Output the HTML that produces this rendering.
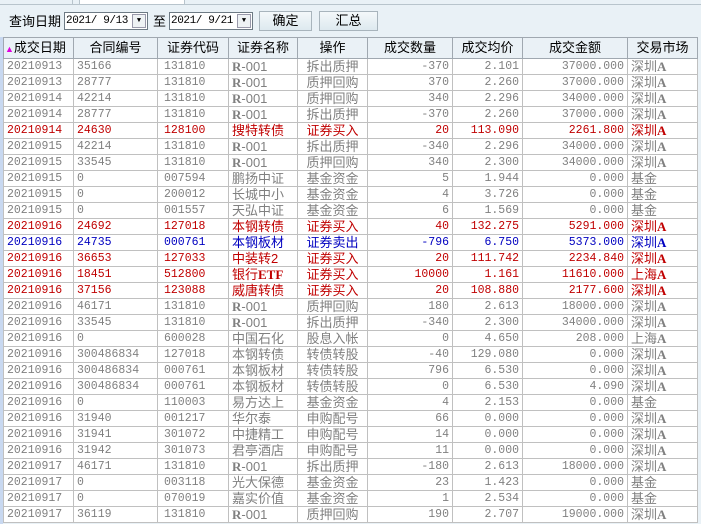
<!DOCTYPE html>
<html><head><meta charset="utf-8"><style>
*{margin:0;padding:0;box-sizing:border-box}
body{width:701px;height:524px;overflow:hidden;background:#e9f1f6;font-family:"Liberation Sans","Noto Sans CJK SC",sans-serif;font-size:12px;position:relative}
.tab{position:absolute;left:79px;top:0;width:106px;height:5px;background:#fff;border:1px solid #b8c4cc;border-top:none}
.tabl{position:absolute;left:72px;top:0;width:1px;height:5px;background:#b8c4cc}
.tb{position:absolute;top:4px;left:0;width:701px;height:1px;background:#b8c4cc}
.lbl{position:absolute;top:11px;font-size:13px;color:#000}
.dt{position:absolute;top:12px;height:18px;background:#fff;border:1px solid #6d7a84;font-family:"Liberation Mono",monospace;font-size:11px;letter-spacing:-0.4px;line-height:16px;padding-left:1px;white-space:pre}
.dt i{position:absolute;right:1px;top:1px;width:14px;height:14px;background:#eef2f4;border:1px solid #99a;font-style:normal;font-size:7px;text-align:center;line-height:13px;letter-spacing:0}
.btn{position:absolute;top:11px;height:20px;background:linear-gradient(#f4f8fa,#dde9ef);border:1px solid #a8b4bc;font-size:13px;text-align:center;line-height:18px}
.lb{position:absolute;left:0;top:37px;width:3px;height:487px;background:#c8d8f0}
table{position:absolute;left:3px;top:37px;border-collapse:collapse;table-layout:fixed;width:694px;background:#fff}
td,th{border:1px solid #c0c0c0;height:16px;line-height:14px;padding:0 3px;white-space:nowrap;overflow:hidden;font-weight:normal}
th{height:21px;background:#eaf1f6;font-size:13px;border-color:#a0a8b0;text-align:center}
td{color:#808080;font-family:"Liberation Mono","Noto Sans CJK SC",monospace;font-size:11.5px}
td:nth-child(4),td:nth-child(5),td:nth-child(9){font-family:"Liberation Sans","Noto Sans CJK SC",sans-serif;font-size:13px}
td:nth-child(n+6):nth-child(-n+8){text-align:right}
td:nth-child(3){padding-left:6px}
td:nth-child(5){text-align:center}
tr.r td{color:#c00000}
tr.b td{color:#0000c0}
b{font-family:"Liberation Serif",serif;font-weight:bold}
</style></head><body>
<div class="tb"></div><div class="tabl"></div><div class="tab"></div>
<div class="lbl" style="left:9px">查询日期</div>
<div class="dt" style="left:64px;width:84px">2021/ 9/13<i>▼</i></div>
<div class="lbl" style="left:153px">至</div>
<div class="dt" style="left:169px;width:84px">2021/ 9/21<i>▼</i></div>
<div class="btn" style="left:259px;width:53px">确定</div>
<div class="btn" style="left:319px;width:59px">汇总</div>
<div class="lb"></div>
<table>
<colgroup><col style="width:70px"><col style="width:84px"><col style="width:71px"><col style="width:69px"><col style="width:70px"><col style="width:85px"><col style="width:70px"><col style="width:105px"><col style="width:70px"></colgroup>
<tr><th style="text-align:left;padding-left:1px"><span style="color:#e000e0;font-size:9px">▲</span>成交日期</th><th>合同编号</th><th>证券代码</th><th>证券名称</th><th>操作</th><th>成交数量</th><th>成交均价</th><th>成交金额</th><th>交易市场</th></tr>
<tr><td>20210913</td><td>35166</td><td>131810</td><td><b>R</b>-001</td><td>拆出质押</td><td>-370</td><td>2.101</td><td>37000.000</td><td>深圳<b>A</b></td></tr>
<tr><td>20210913</td><td>28777</td><td>131810</td><td><b>R</b>-001</td><td>质押回购</td><td>370</td><td>2.260</td><td>37000.000</td><td>深圳<b>A</b></td></tr>
<tr><td>20210914</td><td>42214</td><td>131810</td><td><b>R</b>-001</td><td>质押回购</td><td>340</td><td>2.296</td><td>34000.000</td><td>深圳<b>A</b></td></tr>
<tr><td>20210914</td><td>28777</td><td>131810</td><td><b>R</b>-001</td><td>拆出质押</td><td>-370</td><td>2.260</td><td>37000.000</td><td>深圳<b>A</b></td></tr>
<tr class="r"><td>20210914</td><td>24630</td><td>128100</td><td>搜特转债</td><td>证券买入</td><td>20</td><td>113.090</td><td>2261.800</td><td>深圳<b>A</b></td></tr>
<tr><td>20210915</td><td>42214</td><td>131810</td><td><b>R</b>-001</td><td>拆出质押</td><td>-340</td><td>2.296</td><td>34000.000</td><td>深圳<b>A</b></td></tr>
<tr><td>20210915</td><td>33545</td><td>131810</td><td><b>R</b>-001</td><td>质押回购</td><td>340</td><td>2.300</td><td>34000.000</td><td>深圳<b>A</b></td></tr>
<tr><td>20210915</td><td>0</td><td>007594</td><td>鹏扬中证</td><td>基金资金</td><td>5</td><td>1.944</td><td>0.000</td><td>基金</td></tr>
<tr><td>20210915</td><td>0</td><td>200012</td><td>长城中小</td><td>基金资金</td><td>4</td><td>3.726</td><td>0.000</td><td>基金</td></tr>
<tr><td>20210915</td><td>0</td><td>001557</td><td>天弘中证</td><td>基金资金</td><td>6</td><td>1.569</td><td>0.000</td><td>基金</td></tr>
<tr class="r"><td>20210916</td><td>24692</td><td>127018</td><td>本钢转债</td><td>证券买入</td><td>40</td><td>132.275</td><td>5291.000</td><td>深圳<b>A</b></td></tr>
<tr class="b"><td>20210916</td><td>24735</td><td>000761</td><td>本钢板材</td><td>证券卖出</td><td>-796</td><td>6.750</td><td>5373.000</td><td>深圳<b>A</b></td></tr>
<tr class="r"><td>20210916</td><td>36653</td><td>127033</td><td>中装转2</td><td>证券买入</td><td>20</td><td>111.742</td><td>2234.840</td><td>深圳<b>A</b></td></tr>
<tr class="r"><td>20210916</td><td>18451</td><td>512800</td><td>银行<b>ETF</b></td><td>证券买入</td><td>10000</td><td>1.161</td><td>11610.000</td><td>上海<b>A</b></td></tr>
<tr class="r"><td>20210916</td><td>37156</td><td>123088</td><td>威唐转债</td><td>证券买入</td><td>20</td><td>108.880</td><td>2177.600</td><td>深圳<b>A</b></td></tr>
<tr><td>20210916</td><td>46171</td><td>131810</td><td><b>R</b>-001</td><td>质押回购</td><td>180</td><td>2.613</td><td>18000.000</td><td>深圳<b>A</b></td></tr>
<tr><td>20210916</td><td>33545</td><td>131810</td><td><b>R</b>-001</td><td>拆出质押</td><td>-340</td><td>2.300</td><td>34000.000</td><td>深圳<b>A</b></td></tr>
<tr><td>20210916</td><td>0</td><td>600028</td><td>中国石化</td><td>股息入帐</td><td>0</td><td>4.650</td><td>208.000</td><td>上海<b>A</b></td></tr>
<tr><td>20210916</td><td>300486834</td><td>127018</td><td>本钢转债</td><td>转债转股</td><td>-40</td><td>129.080</td><td>0.000</td><td>深圳<b>A</b></td></tr>
<tr><td>20210916</td><td>300486834</td><td>000761</td><td>本钢板材</td><td>转债转股</td><td>796</td><td>6.530</td><td>0.000</td><td>深圳<b>A</b></td></tr>
<tr><td>20210916</td><td>300486834</td><td>000761</td><td>本钢板材</td><td>转债转股</td><td>0</td><td>6.530</td><td>4.090</td><td>深圳<b>A</b></td></tr>
<tr><td>20210916</td><td>0</td><td>110003</td><td>易方达上</td><td>基金资金</td><td>4</td><td>2.153</td><td>0.000</td><td>基金</td></tr>
<tr><td>20210916</td><td>31940</td><td>001217</td><td>华尔泰</td><td>申购配号</td><td>66</td><td>0.000</td><td>0.000</td><td>深圳<b>A</b></td></tr>
<tr><td>20210916</td><td>31941</td><td>301072</td><td>中捷精工</td><td>申购配号</td><td>14</td><td>0.000</td><td>0.000</td><td>深圳<b>A</b></td></tr>
<tr><td>20210916</td><td>31942</td><td>301073</td><td>君亭酒店</td><td>申购配号</td><td>11</td><td>0.000</td><td>0.000</td><td>深圳<b>A</b></td></tr>
<tr><td>20210917</td><td>46171</td><td>131810</td><td><b>R</b>-001</td><td>拆出质押</td><td>-180</td><td>2.613</td><td>18000.000</td><td>深圳<b>A</b></td></tr>
<tr><td>20210917</td><td>0</td><td>003118</td><td>光大保德</td><td>基金资金</td><td>23</td><td>1.423</td><td>0.000</td><td>基金</td></tr>
<tr><td>20210917</td><td>0</td><td>070019</td><td>嘉实价值</td><td>基金资金</td><td>1</td><td>2.534</td><td>0.000</td><td>基金</td></tr>
<tr><td>20210917</td><td>36119</td><td>131810</td><td><b>R</b>-001</td><td>质押回购</td><td>190</td><td>2.707</td><td>19000.000</td><td>深圳<b>A</b></td></tr>
</table>
</body></html>
